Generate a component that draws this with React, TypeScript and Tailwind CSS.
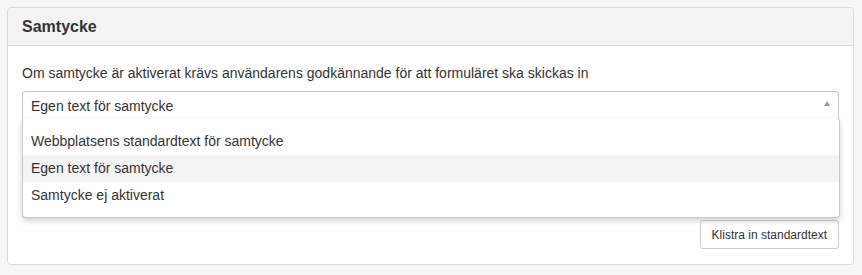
const options = [
  'Webbplatsens standardtext för samtycke',
  'Egen text för samtycke',
  'Samtycke ej aktiverat',
]

export default function App() {
  return (
    <div
      className="min-h-[275px] w-[862px] bg-[#f7f7f7] p-[7px] text-[#333]"
      style={{ fontFamily: '"Liberation Sans", Arial, sans-serif' }}
    >
      <div className="w-[847px] rounded-[4px] border border-[#dcdcdc] bg-white">
        {/* Header */}
        <div className="flex h-[38px] items-center rounded-t-[4px] border-b border-[#dcdcdc] bg-[#f3f3f3] px-[14px]">
          <h3 className="text-[16px] font-bold leading-none text-[#333]">Samtycke</h3>
        </div>

        {/* Body */}
        <div className="px-[14px] pt-[17px] pb-[15px]">
          <p className="text-[14px] leading-[20px]">
            Om samtycke är aktiverat krävs användarens godkännande för att formuläret ska skickas in
          </p>

          <div className="relative mt-[8px]">
            {/* Open select */}
            <div className="flex h-[28px] items-center justify-between rounded-t-[4px] border border-b-0 border-[#c8c8c8] bg-white pl-[8px] pr-[8px]">
              <span className="text-[14px] leading-[20px]">Egen text för samtycke</span>
              <span className="mt-[-4px] h-0 w-0 border-x-[3.5px] border-b-[5px] border-x-transparent border-b-[#999]" />
            </div>

            {/* Hidden custom text field behind the list */}
            <div className="mt-[8px] h-[85px] rounded-[4px] border border-[#ccc]" />

            {/* Dropdown list */}
            <ul className="absolute left-0 right-[-1px] top-[28px] z-10 rounded-b-[4px] border border-t-0 border-[#c8c8c8] bg-white pt-[9px] pb-[8px] shadow-[0_3px_6px_rgba(0,0,0,0.18)]">
              {options.map((o, i) => (
                <li
                  key={o}
                  className={`flex h-[27px] items-center px-[8px] text-[14px] ${i === 1 ? 'bg-[#f3f3f3]' : ''}`}
                >
                  {o}
                </li>
              ))}
            </ul>
          </div>

          <div className="mt-[8px] flex justify-end">
            <button className="h-[29px] rounded-[3px] border border-[#ccc] bg-white px-[11px] text-[12px] leading-none text-[#333]">
              Klistra in standardtext
            </button>
          </div>
        </div>
      </div>
    </div>
  )
}
